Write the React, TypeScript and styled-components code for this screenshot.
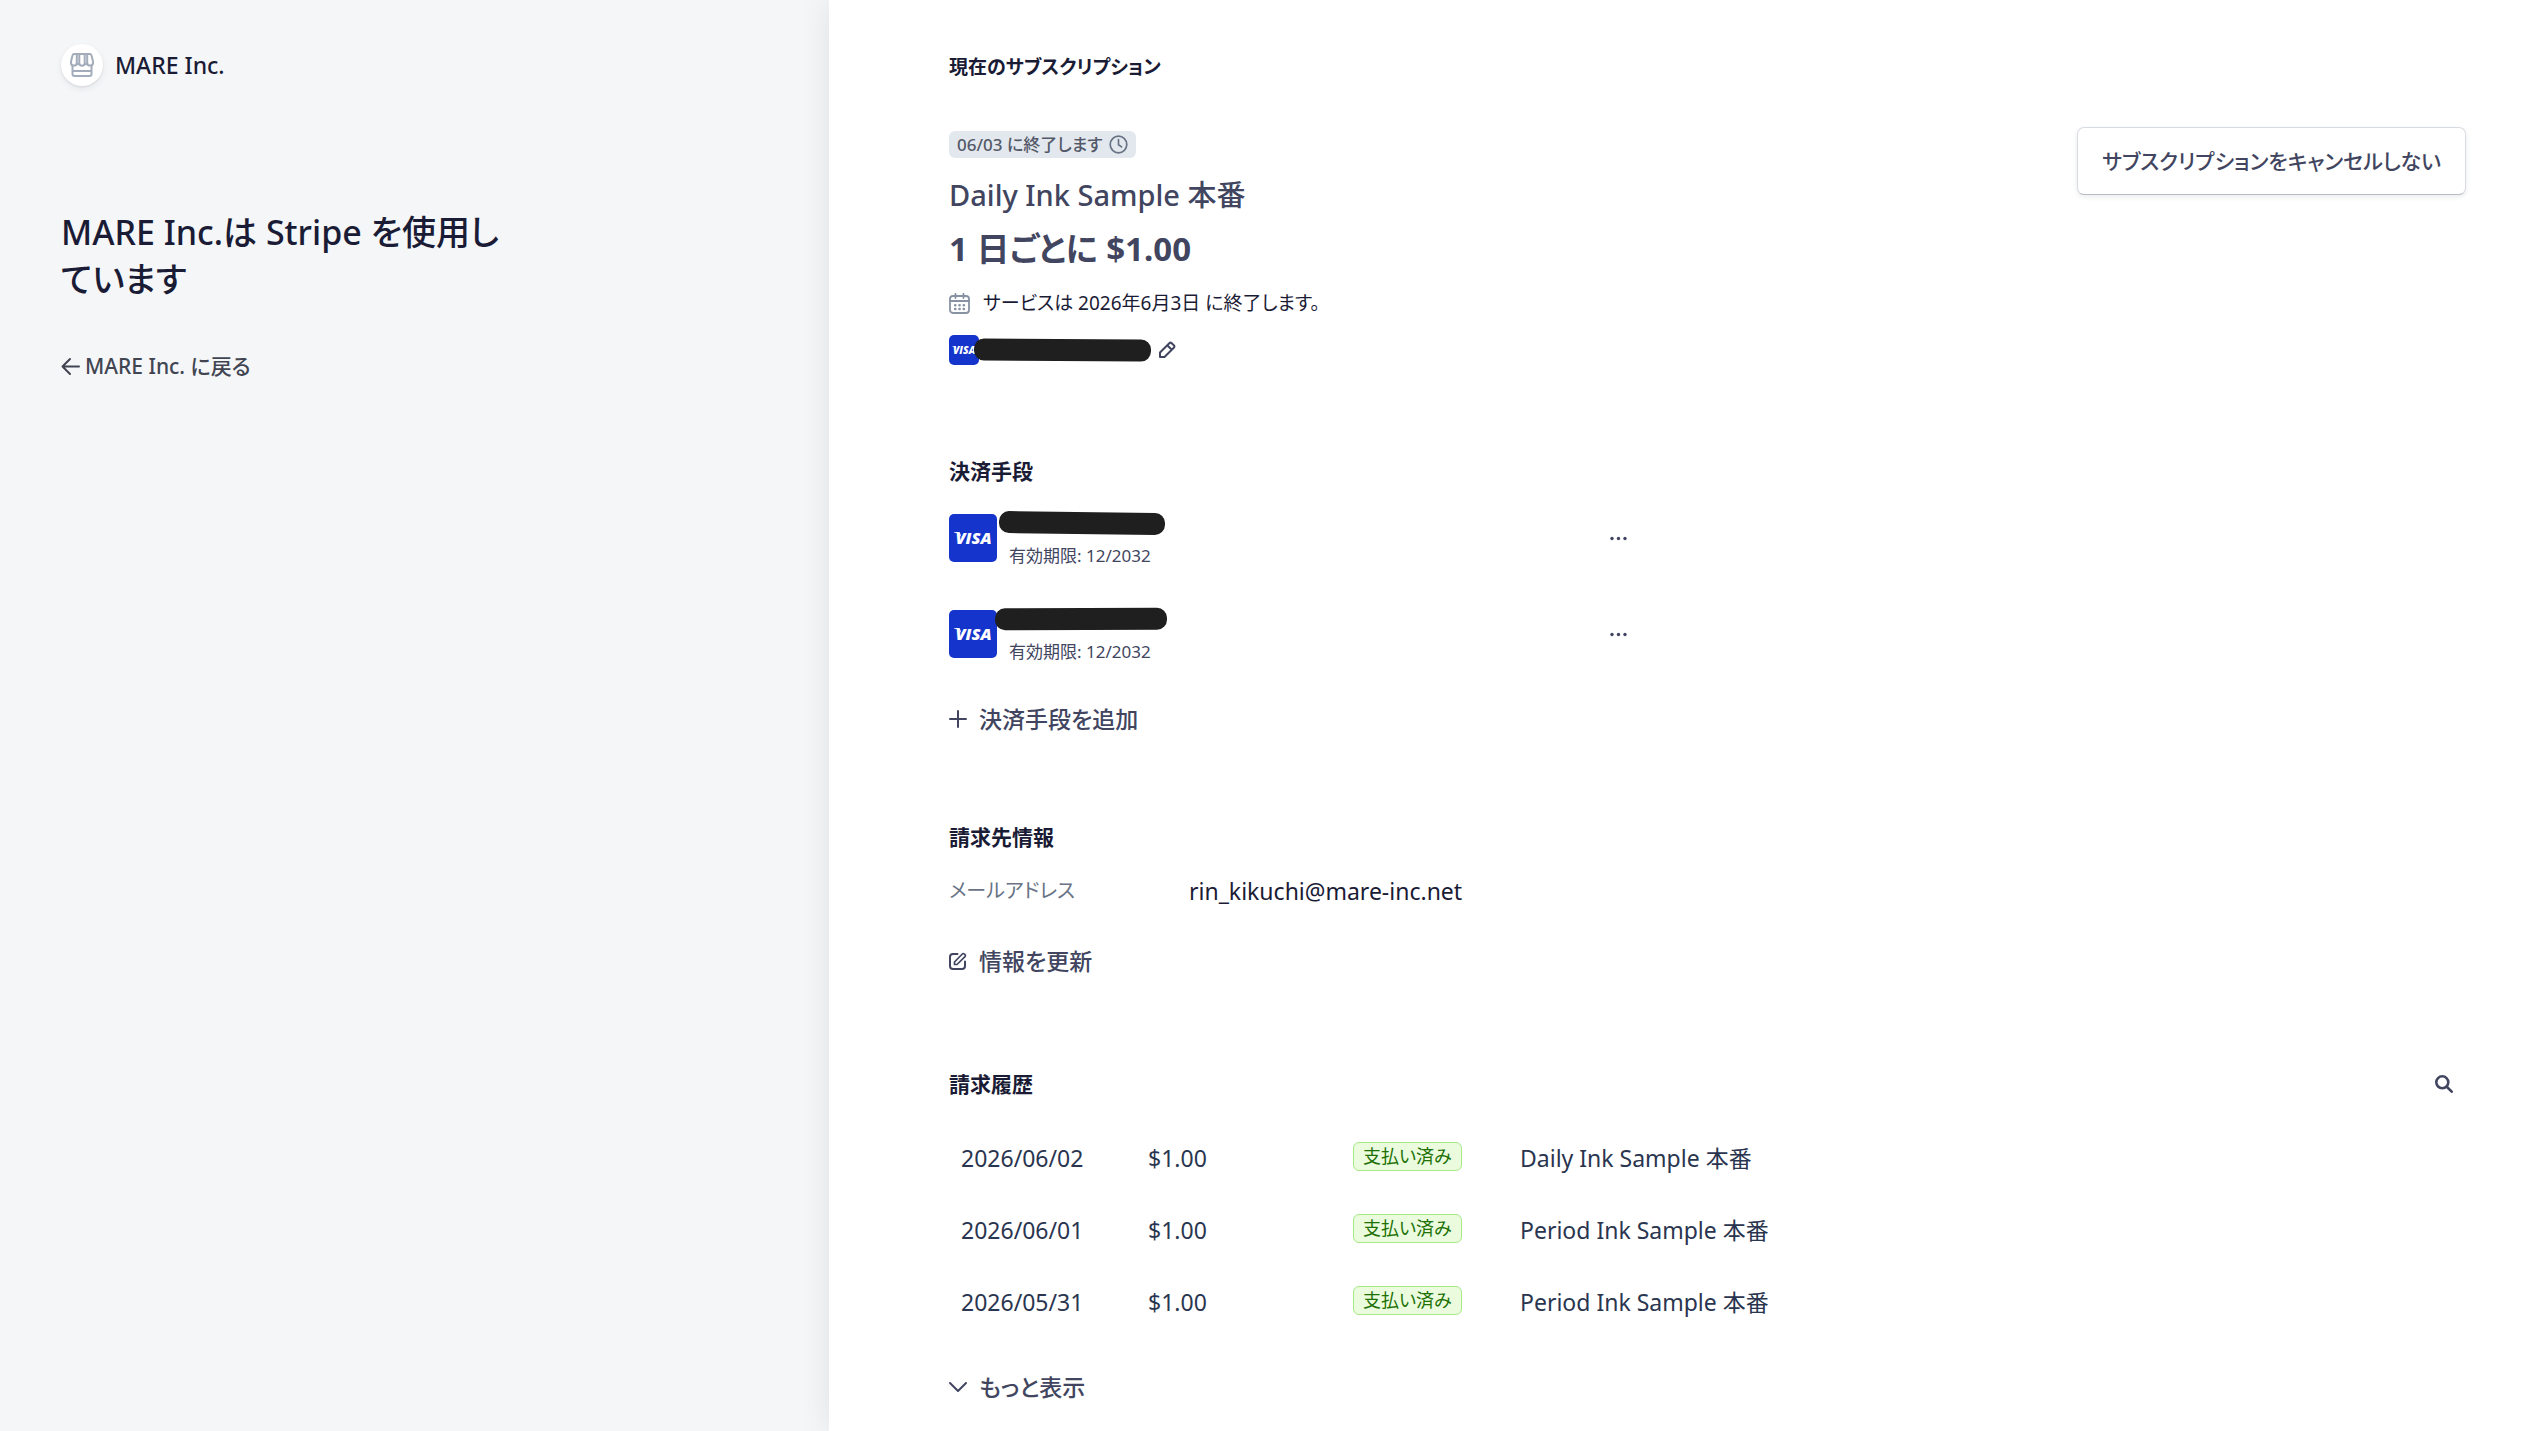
import React from "react";
import styled, { createGlobalStyle } from "styled-components";

const GlobalStyle = createGlobalStyle`
  *, *::before, *::after { box-sizing: border-box; }
  body {
    margin: 0;
    background: #ffffff;
    color: #1a1b35;
    font-family: "Noto Sans", "Noto Sans CJK JP", sans-serif;
    font-size: 23px;
    line-height: 36px;
    font-feature-settings: "palt";
  }
  h1, h2, p, ul, dl, dd { margin: 0; padding: 0; }
  button, a { font: inherit; color: inherit; font-feature-settings: inherit; }
  svg { display: block; flex: none; }
`;

const Page = styled.div`
  display: grid;
  grid-template-columns: 326fr 674fr;
  min-height: 100vh;
`;

const Sidebar = styled.aside`
  background: #f5f6f8;
  padding: 44px 61px;
`;

const Brand = styled.div`
  display: flex;
  align-items: center;
  gap: 12px;
  font-size: 23px;
  line-height: 42px;
  font-weight: 500;
`;

const BrandMark = styled.span`
  display: grid;
  place-items: center;
  width: 42px;
  height: 42px;
  border-radius: 50%;
  background: #ffffff;
  color: #a3acba;
  box-shadow: 0 3px 6px rgba(48, 49, 61, 0.08), 0 1px 2px rgba(0, 0, 0, 0.08);
`;

const Headline = styled.h1`
  max-width: 456px;
  margin-top: 123px;
  font-size: 34px;
  line-height: 47px;
  font-weight: 500;
`;

const BackLink = styled.a`
  display: inline-flex;
  align-items: center;
  gap: 5px;
  margin-top: 48px;
  color: #414552;
  font-size: 21px;
  line-height: 30px;
  font-weight: 500;
  text-decoration: none;
`;

const Main = styled.main`
  padding: 52px 77px 24px 120px;
  background: #ffffff;
  box-shadow: 0 0 30px rgba(0, 0, 0, 0.09);
`;

const Section = styled.section<{ $top?: number }>`
  margin-top: ${(p) => p.$top ?? 0}px;
`;

const SectionTitle = styled.h2<{ $compact?: boolean }>`
  font-size: ${(p) => (p.$compact ? 19 : 21)}px;
  line-height: 30px;
  font-weight: 700;
`;

const SectionHeader = styled.div`
  display: flex;
  justify-content: space-between;
  align-items: center;
  padding-right: 13px;
`;

const Subscription = styled.div`
  display: flex;
  justify-content: space-between;
  align-items: flex-start;
  margin-top: 45px;
`;

const Plan = styled.div`
  padding-top: 4px;
  color: #414560;
`;

const EndBadge = styled.span`
  display: flex;
  align-items: center;
  gap: 6px;
  width: fit-content;
  height: 27px;
  padding: 0 8px;
  border-radius: 6px;
  background: #e3e8ee;
  color: #545969;
  font-size: 17px;
  line-height: 27px;
  font-weight: 500;
  svg { color: #687385; }
`;

const PlanName = styled.p`
  margin-top: 16px;
  font-size: 29px;
  line-height: 42px;
  font-weight: 500;
`;

const PlanPrice = styled.p`
  margin-top: 9px;
  font-size: 33px;
  line-height: 48px;
  font-weight: 700;
`;

const EndNote = styled.p`
  display: flex;
  align-items: center;
  gap: 13px;
  margin-top: 15px;
  color: #1a1b35;
  font-size: 19px;
  line-height: 30px;
  svg { color: #8792a2; }
`;

const PlanCard = styled.div`
  display: flex;
  align-items: center;
  margin-top: 17px;
`;

const Redaction = styled.span<{ $width: number; $shift: number; $tilt: number }>`
  display: block;
  width: ${(p) => p.$width}px;
  height: 22px;
  margin-left: ${(p) => p.$shift}px;
  border-radius: 10px;
  background: #1f1f1f;
  transform: rotate(${(p) => p.$tilt}deg);
`;

const IconButton = styled.button`
  display: grid;
  place-items: center;
  padding: 0;
  border: 0;
  background: none;
  color: #414560;
  cursor: pointer;
`;

const EditButton = styled(IconButton)`
  margin-left: 7px;
`;

const OutlineButton = styled.button`
  height: 68px;
  padding: 0 24px;
  border: 1px solid #d8dbe1;
  border-bottom-color: #b9bcc5;
  border-radius: 7px;
  background: #ffffff;
  color: #414560;
  font-size: 21px;
  font-weight: 500;
  box-shadow: 0 2px 5px rgba(60, 66, 87, 0.1);
  cursor: pointer;
`;

const CardList = styled.ul`
  display: grid;
  gap: 48px;
  width: 45%;
  margin-top: 28px;
  list-style: none;
`;

const CardItem = styled.li`
  display: flex;
  align-items: center;
  height: 48px;
  padding-right: 5px;
`;

const CardDetails = styled.div`
  flex: 1;
  padding-top: 5px;
  font-size: 17px;
  line-height: 27px;
`;

const Expiry = styled.p`
  margin-top: 8px;
  padding-left: 12px;
  color: #414560;
`;

const TextButton = styled.button<{ $top: number }>`
  display: flex;
  align-items: center;
  gap: 12px;
  margin-top: ${(p) => p.$top}px;
  padding: 0;
  border: 0;
  background: none;
  color: #414560;
  font-weight: 500;
  cursor: pointer;
`;

const Details = styled.dl`
  display: grid;
  grid-template-columns: 240px 1fr;
  margin-top: 21px;
  dt { color: #687385; font-size: 20px; }
`;

const History = styled.table`
  width: 100%;
  margin-top: 23px;
  border-collapse: collapse;
  table-layout: fixed;
  color: #2a3550;
  td { height: 72px; padding: 0 12px; }
`;

const Col = styled.col<{ $width?: number }>`
  width: ${(p) => (p.$width ? `${p.$width}px` : "auto")};
`;

const PaidBadge = styled.span`
  display: block;
  width: fit-content;
  height: 29px;
  margin-bottom: 3px;
  padding: 0 9px;
  border: 1px solid #a6eb84;
  border-radius: 6px;
  background: #eafcdd;
  color: #217005;
  font-size: 18px;
  line-height: 26px;
`;

const Stroke = ({ size, width = 2, box = 24, children }: { size: number; width?: number; box?: number; children: React.ReactNode }) => (
  <svg width={size} height={size} viewBox={`0 0 ${box} ${box}`} fill="none" stroke="currentColor" strokeWidth={width} strokeLinecap="round" strokeLinejoin="round" aria-hidden="true">
    {children}
  </svg>
);

const StoreIcon = () => (
  <Stroke size={24} width={2}>
    <path d="M4.200 1h15.600c1 0 1.500.5 1.700 1.400L23 8.500v1.200a2.900 2.900 0 0 1-5.800 0V1M6.800 1v8.700a2.900 2.900 0 0 1-5.800 0V8.500l1.500-6.100C2.700 1.500 3.200 1 4.200 1M9.300 1v9a2.700 2.700 0 0 0 5.400 0V1M6.800 9.500a2 2 0 0 0 2.500 1.800M17.200 9.500a2 2 0 0 1-2.500 1.800" />
    <path d="M2.500 12.500V21a2 2 0 0 0 2 2h15a2 2 0 0 0 2-2v-8.500M3 18h18" />
  </Stroke>
);

const ArrowLeftIcon = () => (
  <Stroke size={19} width={2} box={19}>
    <path d="M1.500 9.500H18M9 2 1.500 9.500 9 17" />
  </Stroke>
);

const ClockIcon = () => (
  <Stroke size={19} width={1.700} box={19}>
    <circle cx="9.500" cy="9.500" r="8.300" />
    <path d="M9.500 4.500v5.200l3 2.200" />
  </Stroke>
);

const CalendarIcon = () => (
  <Stroke size={21} width={1.800} box={21}>
    <rect x="1" y="3" width="19" height="17" rx="3" />
    <path d="M1 8h19M6.500 .8V5M14.500 .8V5" />
    <path d="M6.200 12.200h.1M10.500 12.200h.1M14.800 12.200h.1M6.200 16h.1M10.500 16h.1M14.800 16h.1" strokeWidth={2.6} />
  </Stroke>
);

const PencilIcon = () => (
  <Stroke size={18} width={2} box={18}>
    <path d="M2 16v-4.500L11.300 2.200a1.700 1.700 0 0 1 2.400 0l2.100 2.100a1.700 1.700 0 0 1 0 2.400L6.500 16zM9.500 4.500l4 4" />
  </Stroke>
);

const PlusIcon = () => (
  <Stroke size={18} width={2} box={18}>
    <path d="M9 1v16M1 9h16" />
  </Stroke>
);

const EditIcon = () => (
  <Stroke size={18} width={2} box={18}>
    <path d="M8.500 2H4a3 3 0 0 0-3 3v9a3 3 0 0 0 3 3h9a3 3 0 0 0 3-3V9.500" />
    <path d="M5.500 12.500V10l7.800-8a1.400 1.400 0 0 1 2 0l.7.700a1.400 1.400 0 0 1 0 2L8 12.500z" strokeWidth={1.7} />
  </Stroke>
);

const ChevronIcon = () => (
  <Stroke size={18} width={2} box={18}>
    <path d="m1 5 8 8 8-8" />
  </Stroke>
);

const SearchIcon = () => (
  <Stroke size={18} width={2.6} box={18}>
    <circle cx="7.300" cy="7.300" r="6" />
    <path d="m12 12 4.700 4.700" strokeWidth={2.600} />
  </Stroke>
);

const MoreIcon = () => (
  <svg width="17" height="5" viewBox="0 0 17 5" fill="currentColor" aria-hidden="true">
    <circle cx="2" cy="2.500" r="1.700" />
    <circle cx="8.500" cy="2.500" r="1.700" />
    <circle cx="15" cy="2.500" r="1.700" />
  </svg>
);

const VisaLogo = ({ size }: { size: number }) => (
  <svg width={size} height={size} viewBox="0 0 48 48" role="img" aria-label="Visa">
    <rect width="48" height="48" rx={size > 40 ? 5 : 8} fill="#1434cb" />
    <path d="M5 18h5.500l2 5C11 20.500 8.500 19 5 18.400z" fill="#ffffff" />
    <text x="24.500" y="30" textAnchor="middle" fill="#ffffff" fontFamily="'Open Sans', 'Noto Sans', sans-serif" fontSize="16.500" fontWeight="800" fontStyle="italic">
      VISA
    </text>
  </svg>
);

const cards = [
  { id: 1, expiry: "12/2032", width: 166, shift: 2, tilt: 0.7 },
  { id: 2, expiry: "12/2032", width: 172, shift: -2, tilt: -0.2 },
];

const invoices = [
  { date: "2026/06/02", amount: "$1.00", status: "支払い済み", name: "Daily Ink Sample 本番" },
  { date: "2026/06/01", amount: "$1.00", status: "支払い済み", name: "Period Ink Sample 本番" },
  { date: "2026/05/31", amount: "$1.00", status: "支払い済み", name: "Period Ink Sample 本番" },
];

export default function App() {
  return (
    <>
      <GlobalStyle />
      <Page lang="ja">
        <Sidebar>
          <Brand>
            <BrandMark>
              <StoreIcon />
            </BrandMark>
            MARE Inc.
          </Brand>
          <Headline>MARE Inc.は Stripe を使用しています</Headline>
          <BackLink href="#">
            <ArrowLeftIcon />
            MARE Inc. に戻る
          </BackLink>
        </Sidebar>
        <Main>
          <Section>
            <SectionTitle $compact>現在のサブスクリプション</SectionTitle>
            <Subscription>
              <Plan>
                <EndBadge>
                  06/03 に終了します
                  <ClockIcon />
                </EndBadge>
                <PlanName>Daily Ink Sample 本番</PlanName>
                <PlanPrice>1 日ごとに $1.00</PlanPrice>
                <EndNote>
                  <CalendarIcon />
                  サービスは 2026年6月3日 に終了します。
                </EndNote>
                <PlanCard>
                  <VisaLogo size={30} />
                  <Redaction $width={177} $shift={-5} $tilt={0.4} />
                  <EditButton type="button" aria-label="決済手段を編集">
                    <PencilIcon />
                  </EditButton>
                </PlanCard>
              </Plan>
              <OutlineButton type="button">サブスクリプションをキャンセルしない</OutlineButton>
            </Subscription>
          </Section>

          <Section $top={91}>
            <SectionTitle>決済手段</SectionTitle>
            <CardList>
              {cards.map((card) => (
                <CardItem key={card.id}>
                  <VisaLogo size={48} />
                  <CardDetails>
                    <Redaction $width={card.width} $shift={card.shift} $tilt={card.tilt} />
                    <Expiry>有効期限: {card.expiry}</Expiry>
                  </CardDetails>
                  <IconButton type="button" aria-label="その他の操作">
                    <MoreIcon />
                  </IconButton>
                </CardItem>
              ))}
            </CardList>
            <TextButton type="button" $top={43}>
              <PlusIcon />
              決済手段を追加
            </TextButton>
          </Section>

          <Section $top={85}>
            <SectionTitle>請求先情報</SectionTitle>
            <Details>
              <dt>メールアドレス</dt>
              <dd>rin_kikuchi@mare-inc.net</dd>
            </Details>
            <TextButton type="button" $top={34}>
              <EditIcon />
              情報を更新
            </TextButton>
          </Section>

          <Section $top={90}>
            <SectionHeader>
              <SectionTitle>請求履歴</SectionTitle>
              <IconButton type="button" aria-label="検索">
                <SearchIcon />
              </IconButton>
            </SectionHeader>
            <History>
              <colgroup>
                <Col $width={187} />
                <Col $width={205} />
                <Col $width={167} />
                <Col />
              </colgroup>
              <tbody>
                {invoices.map((invoice) => (
                  <tr key={invoice.date}>
                    <td>{invoice.date}</td>
                    <td>{invoice.amount}</td>
                    <td>
                      <PaidBadge>{invoice.status}</PaidBadge>
                    </td>
                    <td>{invoice.name}</td>
                  </tr>
                ))}
              </tbody>
            </History>
            <TextButton type="button" $top={31}>
              <ChevronIcon />
              もっと表示
            </TextButton>
          </Section>
        </Main>
      </Page>
    </>
  );
}
